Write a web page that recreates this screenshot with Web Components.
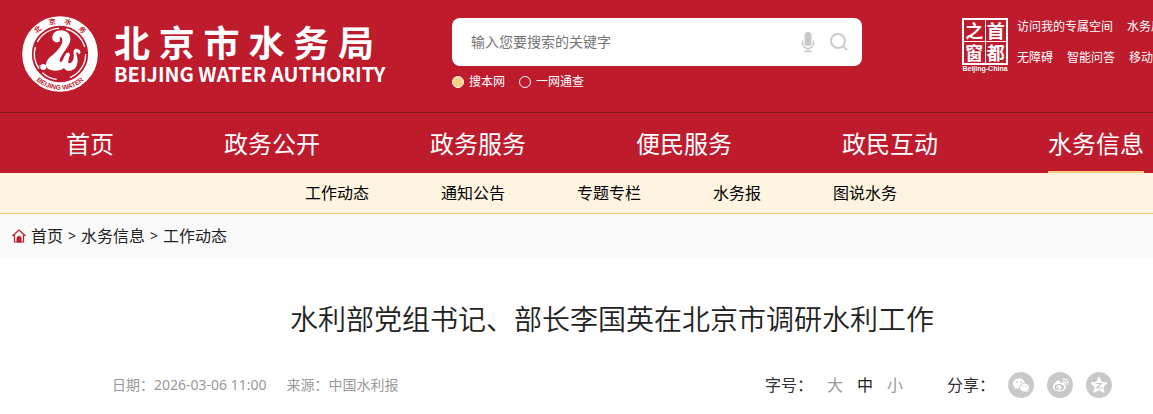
<!DOCTYPE html>
<html lang="zh-CN">
<head>
<meta charset="utf-8">
<title>水利部党组书记、部长李国英在北京市调研水利工作</title>
<style>
  body {
    margin: 0;
    background: #fff;
    color: #333;
    font-family: "Noto Sans", "Noto Sans CJK SC", sans-serif;
    font-size: 16px;
    overflow-x: hidden;
    --red: #be1b2d;
    --gold: #f8cd80;
  }
</style>
</head>
<body>
<site-header>
  <brand-logo slot="brand"></brand-logo>
  <search-box slot="search" placeholder="输入您要搜索的关键字"></search-box>
  <capital-window slot="tools">
    <a href="#" slot="top">访问我的专属空间</a>
    <a href="#" slot="top">水务局</a>
    <a href="#" slot="bottom">无障碍</a>
    <a href="#" slot="bottom">智能问答</a>
    <a href="#" slot="bottom">移动</a>
  </capital-window>
</site-header>

<main-nav>
  <a href="#">首页</a>
  <a href="#">政务公开</a>
  <a href="#">政务服务</a>
  <a href="#">便民服务</a>
  <a href="#">政民互动</a>
  <a href="#" class="active">水务信息</a>
</main-nav>

<sub-nav>
  <a href="#">工作动态</a>
  <a href="#">通知公告</a>
  <a href="#">专题专栏</a>
  <a href="#">水务报</a>
  <a href="#">图说水务</a>
</sub-nav>

<bread-crumb>
  <a href="#">首页</a>
  <span>&gt;</span>
  <a href="#">水务信息</a>
  <span>&gt;</span>
  <a href="#">工作动态</a>
</bread-crumb>

<article-head>
  <span slot="title">水利部党组书记、部长李国英在北京市调研水利工作</span>
  <span slot="meta">日期：2026-03-06 11:00</span>
  <span slot="meta">来源：中国水利报</span>
  <font-sizer slot="actions"></font-sizer>
  <share-bar slot="actions"></share-bar>
</article-head>

<script>
// attach an open root and fill it from a template
function mount(el, html) {
  const template = document.createElement('template');
  template.innerHTML = html;
  el.attachShadow({ mode: 'open' }).appendChild(template.content.cloneNode(true));
}

class SiteHeader extends HTMLElement {
  constructor() {
    super();
    mount(this, `
      <style>
        :host { display: block; background: var(--red); color: #fff; overflow: hidden; }
        header { display: flex; align-items: flex-start; padding: 16px 0 20px 22px; }
        .brand { flex: none; width: 430px; }
        .search { flex: none; width: 410px; padding-top: 2px; }
        .tools { flex: none; padding: 2px 0 0 100px; }
      </style>
      <header>
        <div class="brand"><slot name="brand"></slot></div>
        <div class="search"><slot name="search"></slot></div>
        <div class="tools"><slot name="tools"></slot></div>
      </header>
    `);
  }
}

class BrandLogo extends HTMLElement {
  constructor() {
    super();
    mount(this, `
      <style>
        :host { display: block; }
        a { display: flex; align-items: center; gap: 16px; color: #fff; text-decoration: none; }
        svg { display: block; width: 76px; height: 76px; }
        .cn {
          display: block;
          width: 260px;
          font: bold 36px/38px "Noto Sans CJK SC", sans-serif;
          text-align-last: justify;
        }
        .en {
          display: block;
          padding-top: 2px;
          font: bold 20px/24px "Noto Sans CJK SC", sans-serif;
          white-space: nowrap;
        }
      </style>
      <a href="#">
        <svg viewBox="-114 -114 228 228" aria-hidden="true">
          <defs>
            <path id="arc-top" d="M-91 0A91 91 0 0 1 91 0"/>
            <path id="arc-bottom" d="M-107 0A107 107 0 0 0 107 0"/>
          </defs>
          <circle r="99" fill="#be1b2d" stroke="#fff" stroke-width="29"/>
          <g fill="none" stroke="#fff" stroke-width="4">
            <path d="M-3 -77A77 77 0 0 0 -68 -36"/>
            <path d="M-74 -21A77 77 0 0 0 -63 44"/>
            <path d="M-53 56A77 77 0 0 0 -10 76"/>
            <path d="M18 -75A77 77 0 0 1 74 -21"/>
            <path d="M77 0A77 77 0 0 1 30 71"/>
          </g>
          <path fill="#fff" d="M-23 -47C-24 -61 -13 -71 3 -71C21 -71 33 -58 31 -42C29 -26 15 -12 4 7C-1 15 -3 23 2 24C9 25 10 9 19 -2C24 -8 32 -4 29 5C26 16 22 27 28 28C36 29 44 13 41 1C38 -14 48 -20 58 -12C64 -6 61 2 56 1C55 -6 48 -8 49 0C57 21 52 43 36 49C24 53 16 49 12 42C2 51 -20 53 -34 46C-48 37 -42 19 -27 7C-9 -8 7 -25 7 -40C7 -49 3 -52 0 -51C-3 -49 3 -44 -1 -38C-8 -31 -22 -36 -23 -47Z"/>
          <circle cx="-50" cy="39" r="9" fill="#fff"/>
          <path d="M-62 36q12 -6 20 5" fill="none" stroke="#fff" stroke-width="3"/>
          <g fill="#be1b2d" font-family="Noto Sans CJK SC, sans-serif" font-weight="700" text-anchor="middle">
            <text font-size="21" letter-spacing="24"><textPath href="#arc-top" startOffset="54%">北京水务</textPath></text>
            <text font-size="20" font-family="Liberation Sans, sans-serif"><textPath href="#arc-bottom" startOffset="50%">BEIJING WATER</textPath></text>
          </g>
        </svg>
        <span>
          <span class="cn">北京市水务局</span>
          <span class="en">BEIJING WATER AUTHORITY</span>
        </span>
      </a>
    `);
  }
}

class SearchBox extends HTMLElement {
  constructor() {
    super();
    mount(this, `
      <style>
        :host { display: block; }
        .field {
          display: flex;
          align-items: center;
          gap: 14px;
          height: 48px;
          padding: 0 13px 0 19px;
          box-sizing: border-box;
          background: #fff;
          border-radius: 8px;
        }
        input[type="text"] {
          flex: 1;
          min-width: 0;
          padding: 0;
          border: 0;
          outline: none;
          background: none;
          font: 14px/20px "Noto Sans", "Noto Sans CJK SC", sans-serif;
        }
        input::placeholder { color: #757575; opacity: 1; }
        button { flex: none; padding: 0; border: 0; background: none; cursor: pointer; }
        svg { display: block; }
        .scope { display: flex; gap: 14px; padding-top: 7px; font-size: 12px; line-height: 18px; }
        label { display: flex; align-items: center; gap: 5px; }
        input[type="radio"] {
          appearance: none;
          width: 12px;
          height: 12px;
          margin: 0;
          border: 1px solid #fff;
          border-radius: 50%;
        }
        input[type="radio"]:checked { background: #f6d283; }
      </style>
      <form>
        <div class="field">
          <input type="text" aria-label="搜索">
          <button type="button" aria-label="语音">
            <svg width="14" height="22" viewBox="0 0 14 22">
              <rect x="3.5" y="1" width="7" height="14" rx="3.5" fill="#c8c8c8"/>
              <path d="M1.5 9.5V12a5.5 5.5 0 0 0 11 0V9.500M7 17.500V20M3 20.500h8" fill="none" stroke="#c8c8c8" stroke-width="1.500"/>
            </svg>
          </button>
          <button type="submit" aria-label="提交">
            <svg width="20" height="20" viewBox="0 0 20 20" fill="none" stroke="#cacaca" stroke-width="2">
              <circle cx="9" cy="9" r="7"/>
              <path d="M14 14l4 4"/>
            </svg>
          </button>
        </div>
        <div class="scope">
          <label><input type="radio" name="scope" checked>搜本网</label>
          <label><input type="radio" name="scope">一网通查</label>
        </div>
      </form>
    `);
    this.shadowRoot.querySelector('form').addEventListener('submit', (e) => e.preventDefault());
  }

  connectedCallback() {
    this.shadowRoot.querySelector('input').placeholder = this.getAttribute('placeholder') || '';
  }
}

class CapitalWindow extends HTMLElement {
  constructor() {
    super();
    mount(this, `
      <style>
        :host { display: flex; gap: 9px; }
        .seal { display: block; flex: none; width: 46px; color: #fff; text-decoration: none; }
        .grid {
          display: grid;
          grid-template-columns: 1fr 1fr;
          gap: 1px;
          border: 2px solid #fff;
          background: #fff;
        }
        .grid span {
          background: var(--red);
          font: bold 18px/20px "Noto Sans CJK SC", sans-serif;
          height: 21px;
          text-align: center;
        }
        .name {
          display: flex;
          justify-content: center;
          font: bold 7px/8px "Liberation Sans", sans-serif;
          white-space: nowrap;
        }
        .row { display: flex; gap: 14px; font-size: 12px; line-height: 18px; white-space: nowrap; }
        .row + .row { margin-top: 13px; }
        ::slotted(a) { color: #fff; text-decoration: none; }
      </style>
      <a class="seal" href="#">
        <span class="grid"><span>之</span><span>首</span><span>窗</span><span>都</span></span>
        <span class="name">Beijing-China</span>
      </a>
      <div>
        <div class="row"><slot name="top"></slot></div>
        <div class="row"><slot name="bottom"></slot></div>
      </div>
    `);
  }
}

class MainNav extends HTMLElement {
  constructor() {
    super();
    mount(this, `
      <style>
        :host { display: block; background: var(--red); border-top: 1px solid #8f1522; overflow: hidden; }
        nav { display: flex; gap: 110px; padding-left: 66px; }
        ::slotted(a) {
          flex: none;
          box-sizing: border-box;
          height: 60px;
          border-bottom: 2px solid transparent;
          color: #fff;
          font-size: 24px;
          line-height: 62px;
          text-decoration: none;
        }
        ::slotted(a.active) { border-bottom-color: var(--gold); }
      </style>
      <nav><slot></slot></nav>
    `);
  }
}

class SubNav extends HTMLElement {
  constructor() {
    super();
    mount(this, `
      <style>
        :host { display: block; background: #fef4df; border-bottom: 1px solid var(--gold); }
        nav { display: flex; gap: 72px; padding-left: 305px; }
        ::slotted(a) { color: #000; font-size: 16px; line-height: 40px; text-decoration: none; }
      </style>
      <nav><slot></slot></nav>
    `);
  }
}

class BreadCrumb extends HTMLElement {
  constructor() {
    super();
    mount(this, `
      <style>
        :host { display: block; background: #fafafa; }
        nav { display: flex; align-items: center; gap: 5px; padding-left: 12px; line-height: 44px; }
        svg { display: block; }
        ::slotted(a) { color: #222; text-decoration: none; }
        ::slotted(span) { color: #222; font-size: 14px; }
      </style>
      <nav>
        <svg width="14" height="14" viewBox="0 0 14 14" fill="none" stroke="#be1b2d">
          <path d="M.5 7L7 1l6.500 6M2.500 6v7h9V6" stroke-width="1.200"/>
          <path d="M5 13V8.500L7 7l2 1.500V13z" fill="#be1b2d"/>
        </svg>
        <slot></slot>
      </nav>
    `);
  }
}

class ArticleHead extends HTMLElement {
  constructor() {
    super();
    mount(this, `
      <style>
        :host { display: block; padding: 40px 41px 16px 112px; }
        h1 {
          margin: 0;
          color: #222;
          font-family: "Noto Sans CJK SC DemiLight", "Noto Sans CJK SC", sans-serif;
          font-size: 28px;
          font-weight: 350;
          line-height: 40px;
          text-align: center;
        }
        .info { display: flex; justify-content: space-between; align-items: center; padding-top: 34px; }
        .meta { display: flex; gap: 20px; color: #999; font-size: 14px; line-height: 20px; }
        .actions { display: flex; gap: 44px; }
      </style>
      <h1><slot name="title"></slot></h1>
      <div class="info">
        <div class="meta"><slot name="meta"></slot></div>
        <div class="actions"><slot name="actions"></slot></div>
      </div>
    `);
  }
}

class FontSizer extends HTMLElement {
  constructor() {
    super();
    mount(this, `
      <style>
        :host { display: flex; align-items: center; gap: 14px; line-height: 26px; }
        button {
          padding: 0;
          border: 0;
          background: none;
          color: #999;
          font: 16px/26px "Noto Sans", "Noto Sans CJK SC", sans-serif;
          cursor: pointer;
        }
        button.on { color: #222; }
      </style>
      <span>字号：</span>
      <button type="button">大</button>
      <button type="button" class="on">中</button>
      <button type="button">小</button>
    `);
    const buttons = this.shadowRoot.querySelectorAll('button');
    buttons.forEach((button) => {
      button.addEventListener('click', () => {
        buttons.forEach((b) => b.classList.toggle('on', b === button));
      });
    });
  }
}

class ShareBar extends HTMLElement {
  constructor() {
    super();
    mount(this, `
      <style>
        :host { display: flex; align-items: center; gap: 13px; line-height: 26px; }
        a, svg { display: block; }
      </style>
      <span>分享：</span>
      <a href="#" aria-label="微信">
        <svg width="26" height="26" viewBox="0 0 26 26">
          <circle cx="13" cy="13" r="13" fill="#c9c9c9"/>
          <path fill="#fff" d="M11 6.500c-3.500 0-6 2.200-6 5 0 1.600.8 3 2.100 3.900L6.500 17.500l2.300-1.200c.8.2 1.500.3 2.400.3-.6-3.500 2.300-5.900 5.700-5.700C16.300 8.300 13.900 6.500 11 6.500z"/>
          <path fill="#fff" d="M21 15.500c0-2.300-2.100-4-4.500-4S12 13.200 12 15.500s2 4.100 4.500 4.100c.6 0 1.200-.1 1.700-.3l1.700.9-.4-1.600c.9-.8 1.500-1.800 1.500-3.100z"/>
          <g fill="#c9c9c9"><circle cx="9" cy="10" r=".9"/><circle cx="13" cy="10" r=".9"/><circle cx="15" cy="14.500" r=".7"/><circle cx="18" cy="14.500" r=".7"/></g>
        </svg>
      </a>
      <a href="#" aria-label="微博">
        <svg width="26" height="26" viewBox="0 0 26 26">
          <circle cx="13" cy="13" r="13" fill="#c9c9c9"/>
          <path fill="#fff" d="M12.500 8.500c-1.300-1.200-6.500 2.800-6.500 6.600 0 2.900 3.200 4.400 6.200 4.400 4 0 7-2.300 7-4.600 0-1.500-1-2.100-2.200-2.500.8-2-.9-2.600-4-1.400.3-1 .1-2-.5-2.500z"/>
          <ellipse cx="12.200" cy="15.200" rx="4.800" ry="3.300" fill="#c9c9c9"/>
          <circle cx="11.800" cy="15.400" r="2.400" fill="#fff"/>
          <circle cx="11.200" cy="15.900" r="1" fill="#c9c9c9"/>
          <path d="M16 9.700c2-.3 3 .9 2.600 2.500M16 7.200c3.600-.6 5.700 2 4.800 5.300" fill="none" stroke="#fff" stroke-width="1.200" stroke-linecap="round"/>
        </svg>
      </a>
      <a href="#" aria-label="QQ空间">
        <svg width="26" height="26" viewBox="0 0 26 26">
          <circle cx="13" cy="13" r="13" fill="#c9c9c9"/>
          <path fill="#fff" stroke="#fff" stroke-linejoin="round" d="M13 5l2.400 5.300 5.800.7-4.300 3.900 1.200 5.600-5.100-2.900-5.100 2.900 1.200-5.600L4.800 11l5.800-.7z"/>
          <path fill="none" stroke="#c9c9c9" stroke-width="1.200" d="M9.500 11.500h6L10.500 16h6"/>
        </svg>
      </a>
    `);
  }
}

customElements.define('site-header', SiteHeader);
customElements.define('brand-logo', BrandLogo);
customElements.define('search-box', SearchBox);
customElements.define('capital-window', CapitalWindow);
customElements.define('main-nav', MainNav);
customElements.define('sub-nav', SubNav);
customElements.define('bread-crumb', BreadCrumb);
customElements.define('article-head', ArticleHead);
customElements.define('font-sizer', FontSizer);
customElements.define('share-bar', ShareBar);
</script>
</body>
</html>
